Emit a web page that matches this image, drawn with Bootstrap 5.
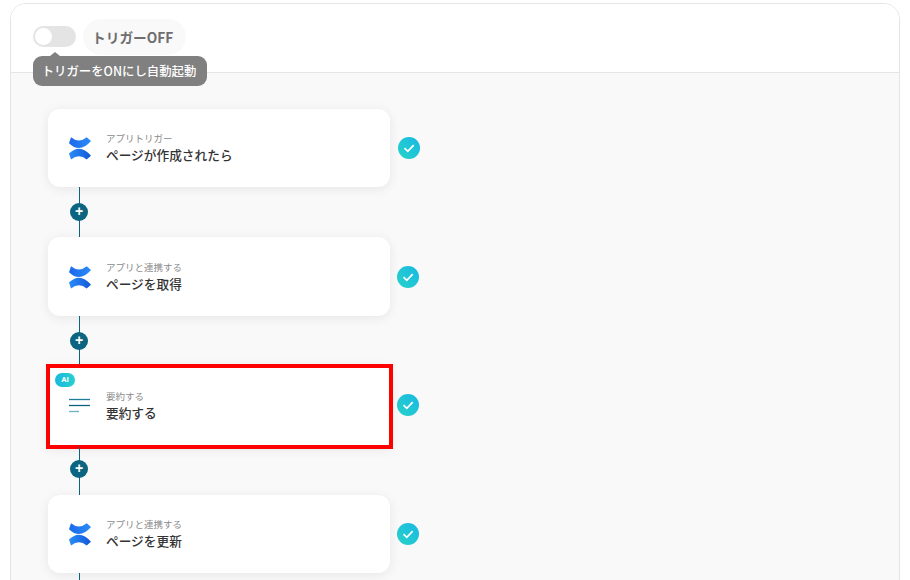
<!DOCTYPE html>
<html lang="ja">
<head>
  <meta charset="UTF-8" />
  <meta name="viewport" content="width=device-width, initial-scale=1.0" />
  <title>フロー</title>
  <link href="https://cdn.jsdelivr.net/npm/bootstrap@5.3.0/dist/css/bootstrap.min.css" rel="stylesheet">
  <style>
    html, body { height: 580px; overflow: hidden; }
    body { background: #fff; font-family: "Noto Sans CJK JP", "Noto Sans", sans-serif; color: #333; }
    .flow-panel { margin: 3px 10px 0; height: 700px; border: 1px solid #e5e5e5; border-radius: 16px; overflow: hidden; }
    .flow-head { position: relative; height: 69px; padding: 15px 0 0 22px; border-bottom: 1px solid #e5e5e5; background: #fff; }
    .trigger-switch { width: 43px; height: 21px; margin-top: 7px; border-radius: 11px; background: #e4e4e4; position: relative; }
    .trigger-switch::after { content: ""; position: absolute; left: 2px; top: 2px; width: 17px; height: 17px; border-radius: 50%; background: #fff; }
    .trigger-state { height: 36px; margin-left: 7px; padding: 0 13px 0 9px; border-radius: 18px; background: #f9f9f9; color: #6e6e6e; font-size: 13.7px; font-weight: 700; line-height: 36px; }
    .trigger-tip { position: absolute; left: 22px; top: 52px; height: 30px; width: 174px; padding-right: 2px; border-radius: 9px; background: #808080; color: #fff; font-size: 12.4px; font-weight: 500; line-height: 30px; text-align: center; white-space: nowrap; z-index: 2; }
    .trigger-tip::before { content: ""; position: absolute; left: 17px; top: -4px; border: 5px solid transparent; border-top: 0; border-bottom: 4px solid #808080; }
    .flow-body { background: #f9f9f9; height: 640px; padding: 36px 0 0 37px; }
    .step-row { display: flex; align-items: center; }
    .step-box { width: 342px; height: 78px; border-radius: 12px; background: #fff; box-shadow: 0 2px 12px rgba(0,0,0,.08); position: relative; display: flex; align-items: center; padding-left: 19px; }
    .step-box.is-second { height: 79px; }
    .step-hit { width: 343px; height: 81px; padding-bottom: 3px; border-radius: 0; outline: 4px solid #f00; outline-offset: -2px; }
    .step-hit .step-text { margin-top: 2px; }
    .step-icon { width: 26px; height: 26px; flex: none; }
    .step-text { margin-left: 13px; line-height: 1; }
    .step-label { font-size: 9.5px; color: #8a8a8a; line-height: 14px; }
    .step-title { font-size: 12.7px; font-weight: 500; color: #333; line-height: 20px; }
    .step-done { width: 22px; height: 22px; margin-left: 7px; flex: none; }
    .step-done.is-first { margin-left: 8px; }
    .step-done.is-hit { margin-left: 6px; margin-bottom: 3px; }
    .ai-tag { position: absolute; left: 7px; top: 7px; width: 20px; height: 14px; border-radius: 7px; background: linear-gradient(90deg, #1ab8e0, #26d0ce); color: #fff; font-family: "Roboto", sans-serif; font-size: 8px; font-weight: 700; line-height: 14px; text-align: center; }
    .step-link { position: relative; width: 1px; height: 50px; margin-left: 31px; background: #0b6580; }
    .step-link.is-short { height: 48px; }
    .step-link::after { content: "+"; position: absolute; left: -9px; top: 16px; width: 18px; height: 18px; border-radius: 50%; background: #0b6580; color: #fff; font: 700 14px/17px "Liberation Sans", sans-serif; text-align: center; }
    .step-link.is-short::after { top: 13px; }
    .step-link.is-end::after { display: none; }
  </style>
</head>
<body>

<svg width="0" height="0" class="position-absolute">
  <defs>
    <linearGradient id="confA" x1="0" y1="0" x2="1" y2="0"><stop offset="0" stop-color="#1c68ea"/><stop offset="1" stop-color="#2a8cf8"/></linearGradient>
    <linearGradient id="confB" x1="0" y1="0" x2="1" y2="0"><stop offset="0" stop-color="#2a8cf8"/><stop offset="1" stop-color="#1259d8"/></linearGradient>
    <linearGradient id="doneFill" x1="0" y1="1" x2="1" y2="0"><stop offset="0" stop-color="#28d3c8"/><stop offset="1" stop-color="#18b8e4"/></linearGradient>
    <symbol id="conf-logo" viewBox="0 0 26 26">
      <path d="M4 2.200 Q12 8.800 19.700 2.200 L24 6 Q13 18.900 2 8.200 Z" fill="url(#confA)"/>
      <path d="M2 18.600 Q13 7.900 24 20.800 L19.700 24.600 Q12 18 4 24.600 Z" fill="url(#confB)"/>
    </symbol>
    <symbol id="done-mark" viewBox="0 0 22 22">
      <circle cx="11" cy="11" r="11" fill="url(#doneFill)"/>
      <path d="M6.500 11.200 L9.800 14.300 L15.700 8.200" fill="none" stroke="#fff" stroke-width="1.700"/>
    </symbol>
  </defs>
</svg>

<div class="flow-panel">
  <div class="flow-head d-flex align-items-start">
    <div class="trigger-switch"></div>
    <div class="trigger-state">トリガーOFF</div>
    <div class="trigger-tip">トリガーをONにし自動起動</div>
  </div>

  <div class="flow-body">
    <div class="step-row">
      <div class="step-box">
        <svg class="step-icon"><use href="#conf-logo"/></svg>
        <div class="step-text">
          <div class="step-label">アプリトリガー</div>
          <div class="step-title">ページが作成されたら</div>
        </div>
      </div>
      <svg class="step-done is-first"><use href="#done-mark"/></svg>
    </div>
    <div class="step-link"></div>

    <div class="step-row">
      <div class="step-box is-second">
        <svg class="step-icon"><use href="#conf-logo"/></svg>
        <div class="step-text">
          <div class="step-label">アプリと連携する</div>
          <div class="step-title">ページを取得</div>
        </div>
      </div>
      <svg class="step-done"><use href="#done-mark"/></svg>
    </div>
    <div class="step-link"></div>

    <div class="step-row">
      <div class="step-box step-hit">
        <span class="ai-tag">AI</span>
        <svg class="step-icon" viewBox="0 0 26 26">
          <path d="M2 7.500h21" stroke="#1f7d99" stroke-width="1.300"/>
          <path d="M2 13.500h21" stroke="#0b6580" stroke-width="1.300"/>
          <path d="M2 19.500h10" stroke="#6fb0c2" stroke-width="1.300"/>
        </svg>
        <div class="step-text">
          <div class="step-label">要約する</div>
          <div class="step-title">要約する</div>
        </div>
      </div>
      <svg class="step-done is-hit"><use href="#done-mark"/></svg>
    </div>
    <div class="step-link is-short"></div>

    <div class="step-row">
      <div class="step-box">
        <svg class="step-icon"><use href="#conf-logo"/></svg>
        <div class="step-text">
          <div class="step-label">アプリと連携する</div>
          <div class="step-title">ページを更新</div>
        </div>
      </div>
      <svg class="step-done"><use href="#done-mark"/></svg>
    </div>
    <div class="step-link is-end"></div>
  </div>
</div>

<script src="https://cdn.jsdelivr.net/npm/bootstrap@5.3.0/dist/js/bootstrap.bundle.min.js"></script>
</body>
</html>
